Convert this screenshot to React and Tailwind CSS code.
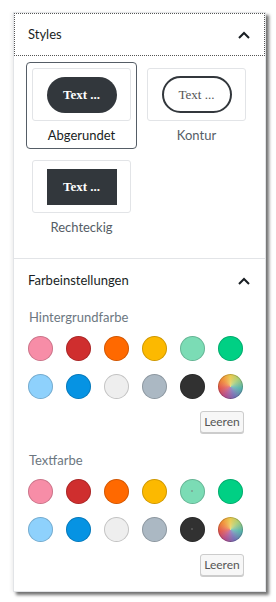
import React from 'react';

const colors = [
  'bg-[#f78da7]', 'bg-[#cf2e2e]', 'bg-[#ff6900]', 'bg-[#fcb900]', 'bg-[#7bdcb5]', 'bg-[#00d084]',
  'bg-[#8ed1fc]', 'bg-[#0693e3]', 'bg-[#eeeeee]', 'bg-[#abb8c3]', 'bg-[#313131]',
  'bg-[radial-gradient(circle,rgba(255,255,255,0.3),rgba(255,255,255,0)_70%),conic-gradient(from_0deg,#e8c848,#a8cc70_45deg,#50b0a8_100deg,#7068b0_160deg,#b04888_210deg,#e05048_260deg,#f08a30_310deg,#e8c848_360deg)]',
];

function Chevron() {
  return (
    <svg width="12" height="8" viewBox="0 0 12 8" className="block">
      <polyline points="1,7 6,2 11,7" fill="none" stroke="#191e23" strokeWidth="2" />
    </svg>
  );
}

function Header({ title, focused }) {
  return (
    <div className={`h-[43px] flex items-center justify-between pl-[14px] pr-[15px] ${focused ? 'outline outline-1 outline-dotted outline-[#555] -outline-offset-1' : ''}`}>
      <span className="text-[13px] text-[#191e23]">{title}</span>
      <Chevron />
    </div>
  );
}

function StyleCard({ label, active, children }) {
  return (
    <div className={`w-[111px] rounded-[4px] border px-[5px] pt-[5px] pb-[1px] ${active ? 'border-[#555d66]' : 'border-transparent'}`}>
      <div className="h-[53px] rounded-[3px] border border-[#e2e4e7] flex items-center justify-center">
        {children}
      </div>
      <div className={`h-[26px] pt-[3px] flex items-center justify-center text-[13px] ${active ? 'text-[#191e23]' : 'text-[#555d66]'}`}>{label}</div>
    </div>
  );
}

function Palette({ title, dots }) {
  return (
    <div>
      <div className="h-[18px] leading-[18px] pl-[1px] text-[13px] text-[#6c7781]">{title}</div>
      <div className="mt-[10px] grid grid-cols-[repeat(6,25px)] gap-x-[13px] gap-y-[13px]">
        {colors.map((c, i) => (
          <div key={i} className={`relative w-[25px] h-[25px] rounded-full ${c} shadow-[inset_0_0_0_1px_rgba(0,0,0,0.18)]`}>
            {dots && (i === 4 || i === 10) && (
              <div className="absolute left-[11px] top-[11px] w-[2px] h-[2px] rounded-full bg-[rgba(120,120,120,0.6)]" />
            )}
          </div>
        ))}
      </div>
      <div className="mt-[12px] flex justify-end pr-[21px]">
        <button className="w-[44px] h-[22px] rounded-[3px] border border-[#ccc] bg-[#f7f7f7] shadow-[0_1px_0_#ccc] text-[12px] text-[#555] leading-none">Leeren</button>
      </div>
    </div>
  );
}

export default function App() {
  return (
    <div className="w-[276px] h-[602px] bg-white pt-[12px] pl-[13px] font-['Lato','Open_Sans',sans-serif]">
      <div className="w-[253px] h-[580px] bg-white border border-[#e2e4e7] shadow-[3px_3px_3px_rgba(0,0,0,0.55),-2px_0_3px_rgba(0,0,0,0.06)]">
        <Header title="Styles" focused />
        <div className="pl-[12px] pt-[6px] pb-[17px]">
          <div className="grid grid-cols-[111px_111px] gap-x-[4px] gap-y-[5px]">
            <StyleCard label="Abgerundet" active>
              <div className="w-[70px] h-[36px] rounded-full bg-[#32373c] flex items-center justify-center text-white font-bold text-[13px] font-['Liberation_Serif','DejaVu_Serif',serif]">Text ...</div>
            </StyleCard>
            <StyleCard label="Kontur">
              <div className="w-[70px] h-[37px] rounded-full border-2 border-[#32373c] bg-white flex items-center justify-center text-[#555] text-[13px] font-['Liberation_Serif','DejaVu_Serif',serif]">Text ...</div>
            </StyleCard>
            <StyleCard label="Rechteckig">
              <div className="w-[70px] h-[36px] bg-[#32373c] flex items-center justify-center text-white font-bold text-[13px] font-['Liberation_Serif','DejaVu_Serif',serif]">Text ...</div>
            </StyleCard>
          </div>
        </div>
        <div className="border-t border-[#e2e4e7]">
          <Header title="Farbeinstellungen" />
          <div className="pl-[14px] pt-[6px]">
            <Palette title="Hintergrundfarbe" />
            <div className="h-[18px]" />
            <Palette title="Textfarbe" dots />
          </div>
        </div>
      </div>
    </div>
  );
}
